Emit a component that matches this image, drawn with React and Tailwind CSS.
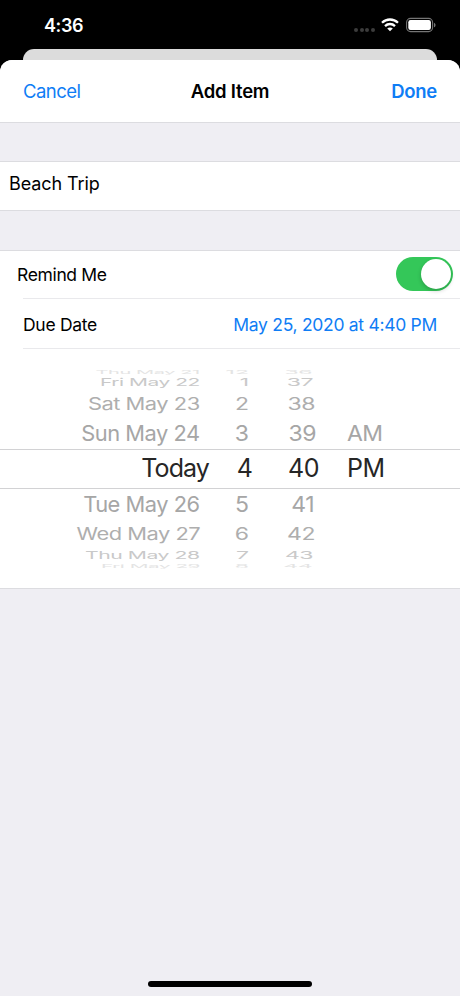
import React, { useState } from 'react';

const pickerRows = [
  { height: 'h-[6px]', tone: 'text-[#e4e4e4]', scale: 'scale-y-[0.22]', narrow: 'scale-x-[0.87]', date: 'Thu May 21', hour: '12', minute: '36', shift: '-translate-x-1' },
  { height: 'h-[15px]', tone: 'text-[#c9c9c9]', scale: 'scale-y-[0.47]', narrow: 'scale-x-[0.91]', date: 'Fri May 22', hour: '1', minute: '37', shift: '-translate-x-[3px]' },
  { height: 'h-[28px]', tone: 'text-[#aeaeae]', scale: 'scale-y-[0.73]', narrow: 'scale-x-[0.95]', date: 'Sat May 23', hour: '2', minute: '38', shift: '-translate-x-px' },
  { height: 'h-[31px]', tone: 'text-[#a6a6a6]', scale: 'scale-y-[0.95]', narrow: 'scale-x-[0.95]', date: 'Sun May 24', hour: '3', minute: '39', period: 'AM', shift: '' },
  { selected: true, height: 'h-[40px]', tone: 'text-[#262626]', scale: '', narrow: '', date: 'Today', hour: '4', minute: '40', period: 'PM', shift: '' },
  { height: 'h-[31px]', tone: 'text-[#a6a6a6]', scale: 'scale-y-[0.95]', narrow: 'scale-x-[0.95]', date: 'Tue May 26', hour: '5', minute: '41', shift: '-translate-x-[2px]' },
  { height: 'h-[28px]', tone: 'text-[#aeaeae]', scale: 'scale-y-[0.73]', narrow: 'scale-x-[0.95]', date: 'Wed May 27', hour: '6', minute: '42', shift: '-translate-x-px' },
  { height: 'h-[15px]', tone: 'text-[#c9c9c9]', scale: 'scale-y-[0.47]', narrow: 'scale-x-[0.92]', date: 'Thu May 28', hour: '7', minute: '43', shift: '-translate-x-[3px]' },
  { height: 'h-[6px]', tone: 'text-[#e4e4e4]', scale: 'scale-y-[0.22]', narrow: 'scale-x-[0.9]', date: 'Fri May 29', hour: '8', minute: '44', shift: '-translate-x-1' },
];

function StatusBar() {
  return (
    <div className="flex h-[49px] justify-between bg-black pl-11 pr-6 text-white">
      <span className="pt-[13px] text-[18px] font-semibold leading-[26px] tracking-[-0.4px]">4:36</span>
      <div className="flex pt-[16px]">
        <div className="flex gap-[1.6px] pt-[12px]">
          <span className="size-[4px] rounded-full bg-[#3c3c3c]" />
          <span className="size-[4px] rounded-full bg-[#3c3c3c]" />
          <span className="size-[4px] rounded-full bg-[#3c3c3c]" />
          <span className="size-[4px] rounded-full bg-[#3c3c3c]" />
        </div>
        <svg className="ml-[6px] mt-[2px]" width="18" height="14" viewBox="0 0 18 14" fill="none" stroke="white" strokeWidth="2.3">
          <path d="M1 4.8C5.5.4 12.5.4 17 4.8" />
          <path d="M4 8.1c2.9-2.8 7.1-2.8 10 0" />
          <path d="M9 13.3 6.2 10.5c1.6-1.5 4-1.5 5.6 0Z" fill="white" stroke="none" />
        </svg>
        <svg className="ml-[7px] mt-[1px]" width="30" height="16" viewBox="0 0 30 16">
          <rect x=".6" y="1.4" width="26" height="13.2" rx="4" fill="none" stroke="#757575" strokeWidth="1.1" />
          <rect x="2.3" y="3.1" width="22.6" height="9.8" rx="2.2" fill="white" />
          <path d="M28 5.7c2 .8 2 3.8 0 4.6Z" fill="#757575" />
        </svg>
      </div>
    </div>
  );
}

function PickerRow({ row }) {
  return (
    <div
      className={`flex items-center whitespace-nowrap ${row.height} ${row.tone} ${
        row.selected ? 'border-y border-[#d2d2d4] text-[25px]' : 'text-[23px]'
      }`}
    >
      <span className={`shrink-0 text-right ${row.selected ? 'w-[209px] tracking-[-0.9px]' : 'w-[200px] tracking-[-0.5px]'}`}>
        <span className={`inline-block origin-right ${row.scale} ${row.narrow}`}>{row.date}</span>
      </span>
      <span className={`shrink-0 text-right ${row.selected ? 'w-[44px]' : 'w-[49px]'}`}>
        <span className={`inline-block ${row.scale}`}>{row.hour}</span>
      </span>
      <span className={`shrink-0 text-right tracking-[-0.5px] ${row.selected ? 'w-[66px]' : 'w-[67px]'}`}>
        <span className={`inline-block ${row.scale} ${row.shift}`}>{row.minute}</span>
      </span>
      <span className={`shrink-0 tracking-[-0.5px] ${row.selected ? 'pl-[28px]' : 'pl-[31px]'}`}>
        <span className={`inline-block ${row.scale}`}>{row.period}</span>
      </span>
    </div>
  );
}

export default function App() {
  const [remind, setRemind] = useState(true);

  return (
    <div className="flex h-[996px] w-[460px] flex-col overflow-hidden bg-black font-['Inter',sans-serif] text-black">
      <StatusBar />
      <div className="mx-[23px] h-[11px] shrink-0 rounded-t-[11px] bg-[#dcdcdc]" />
      <div className="flex flex-1 flex-col overflow-hidden rounded-t-[12px] bg-[#efeef3]">
        <header className="grid h-[63px] grid-cols-3 items-center border-b border-[#dcdce0] bg-white px-[23px] pt-[2px] text-[18.5px]">
          <button className="text-left tracking-[-0.55px] text-[#0f7df5]">Cancel</button>
          <h1 className="text-center font-semibold tracking-[-0.2px]">Add Item</h1>
          <button className="text-right font-semibold tracking-[-0.3px] text-[#0f7df5]">Done</button>
        </header>

        <div className="mt-[38px] h-[50px] border-y border-[#dcdce0] bg-white pl-[9px] pt-[8px] text-[18px] leading-[28px] tracking-[-0.1px]">
          Beach Trip
        </div>

        <section className="mt-[39px] h-[339px] border-y border-[#dcdce0] bg-white">
          <div className="flex h-[47px] items-center justify-between pl-[17px] pr-[7px] text-[17.5px] tracking-[-0.35px]">
            <span className="pt-[2px]">Remind Me</span>
            <button
              onClick={() => setRemind(!remind)}
              className={`mb-px flex h-[34px] w-[57px] items-center rounded-full p-[2px] ${
                remind ? 'justify-end bg-[#34c759]' : 'bg-[#e9e9ea]'
              }`}
            >
              <span className="size-[30px] rounded-full bg-white shadow-[0_2px_4px_rgba(0,0,0,0.2)]" />
            </button>
          </div>
          <div className="ml-[23px] flex h-[51px] items-center justify-between border-y border-[#e9e9ec] pr-[23px] pt-[3px] text-[17.5px] tracking-[-0.29px]">
            <span>Due Date</span>
            <span className="text-[#0f7df5]">May 25, 2020 at 4:40 PM</span>
          </div>
          <div className="mt-[20px] flex flex-col">
            {pickerRows.map((row) => (
              <PickerRow key={row.date} row={row} />
            ))}
          </div>
        </section>

        <div className="mx-auto mb-[9px] mt-auto h-[6px] w-[164px] rounded-full bg-black" />
      </div>
    </div>
  );
}
